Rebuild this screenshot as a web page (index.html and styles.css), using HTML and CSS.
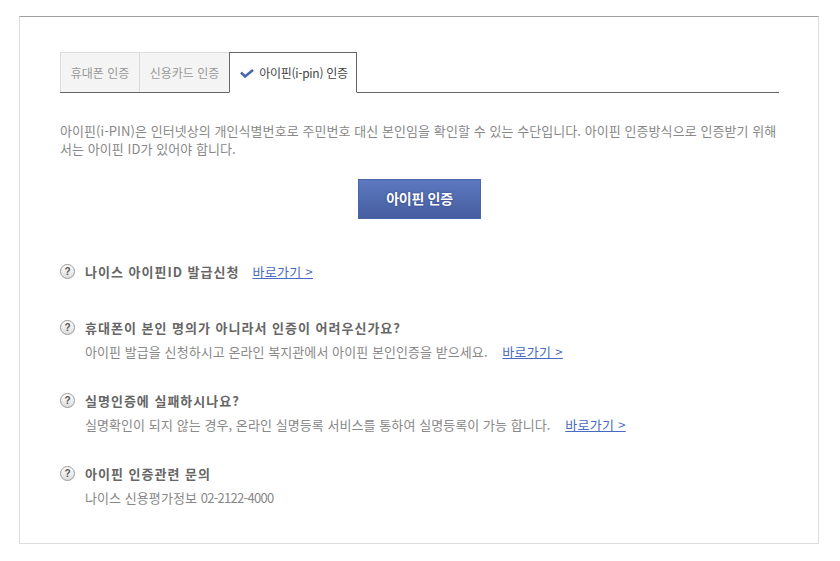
FILE: index.html
```html
<!DOCTYPE html>
<html lang="ko">
<head>
    <meta charset="UTF-8">
    <title>아이핀 인증</title>
    <link rel="stylesheet" href="styles.css">
</head>
<body>
    <div class="panel">
        <ul class="tabs">
            <li class="tab tab1">휴대폰 인증</li>
            <li class="tab tab2">신용카드 인증</li>
            <li class="tab tab3 on">
                <svg class="check" width="14" height="10" viewBox="0 0 14 10"><path d="M1 3.5 L5 7.5 L13 1" fill="none" stroke="#4a66ad" stroke-width="2.6"/></svg>
                아이핀(i-pin) 인증
            </li>
        </ul>

        <p class="desc">아이핀(i-PIN)은 인터넷상의 개인식별번호로 주민번호 대신 본인임을 확인할 수 있는 수단입니다. 아이핀 인증방식으로 인증받기 위해서는 아이핀 ID가 있어야 합니다.</p>

        <div class="btn_wrap"><a class="btn" href="#">아이핀 인증</a></div>

        <dl class="faq faq1">
            <dt><span class="q">?</span>나이스 아이핀ID 발급신청 <a class="go" href="#">바로가기 &gt;</a></dt>
        </dl>
        <dl class="faq faq2">
            <dt><span class="q">?</span>휴대폰이 본인 명의가 아니라서 인증이 어려우신가요?</dt>
            <dd>아이핀 발급을 신청하시고 온라인 복지관에서 아이핀 본인인증을 받으세요. <a class="go" href="#">바로가기 &gt;</a></dd>
        </dl>
        <dl class="faq faq3">
            <dt><span class="q">?</span>실명인증에 실패하시나요?</dt>
            <dd>실명확인이 되지 않는 경우, 온라인 실명등록 서비스를 통하여 실명등록이 가능 합니다. <a class="go" href="#">바로가기 &gt;</a></dd>
        </dl>
        <dl class="faq faq4">
            <dt><span class="q">?</span>아이핀 인증관련 문의</dt>
            <dd>나이스 신용평가정보 <span class="tel">02-2122-4000</span></dd>
        </dl>
    </div>
</body>
</html>
```

FILE: styles.css
```css
body {
    margin: 0;
    background-color: #ffffff;
    font-family: "Noto Sans CJK KR", "Liberation Sans", sans-serif;
    font-size: 13px;
    color: #888888;
}

.panel {
    box-sizing: border-box;
    width: 800px;
    height: 528px;
    margin: 16px 0 0 19px;
    padding: 35px 39px 0 40px;
    border: 1px solid #dddddd;
    border-top-color: #a0a0a0;
}

.tabs {
    display: flex;
    align-items: flex-start;
    box-sizing: border-box;
    height: 41px;
    margin: 0;
    padding: 0;
    list-style: none;
    border-bottom: 1px solid #666666;
}

.tab {
    box-sizing: border-box;
    height: 40px;
    line-height: 39px;
    font-size: 12px;
    text-align: center;
    background-color: #f4f4f4;
    border: 1px solid #dddddd;
    border-bottom: 0;
    border-right: 0;
    color: #999999;
}

.tab1 {
    width: 79px;
}

.tab2 {
    width: 90px;
}

.tab3 {
    width: 128px;
    height: 41px;
    padding-left: 2px;
    background-color: #ffffff;
    border: 1px solid #666666;
    border-bottom: 1px solid #ffffff;
    color: #444444;
    letter-spacing: -0.3px;
}

.check {
    margin-right: 2px;
    vertical-align: -1px;
}

.desc {
    margin: 29px 0 0 0;
    line-height: 18px;
    letter-spacing: 0.07px;
}

.btn_wrap {
    margin-top: 21px;
    text-align: center;
}

.btn {
    display: inline-block;
    box-sizing: border-box;
    width: 123px;
    height: 40px;
    line-height: 37px;
    font-size: 14px;
    font-weight: bold;
    letter-spacing: -0.3px;
    color: #ffffff;
    text-decoration: none;
    text-shadow: 0 0 2px #2b3f7c;
    border: 1px solid #4a66a8;
    background: linear-gradient(#5d78bf, #465ea0);
}

.faq {
    margin: 0;
}

.faq1 {
    margin-top: 42px;
}

.faq2 {
    margin-top: 36px;
}

.faq3 {
    margin-top: 28px;
}

.faq4 {
    margin-top: 28px;
}

.faq dt {
    display: flex;
    align-items: center;
    height: 20px;
    font-weight: bold;
    color: #666666;
    letter-spacing: 1px;
}

.faq dd {
    margin: 5px 0 0 25px;
    line-height: 20px;
    letter-spacing: 0.07px;
}

.tel {
    letter-spacing: -0.7px;
}

.q {
    box-sizing: border-box;
    width: 15px;
    height: 15px;
    margin-right: 10px;
    border: 1px solid #999999;
    border-radius: 50%;
    background: linear-gradient(#ffffff, #dddddd);
    font-family: "Liberation Sans", sans-serif;
    font-size: 10px;
    font-weight: bold;
    line-height: 13px;
    text-align: center;
    color: #555555;
    letter-spacing: 0;
}

.go {
    margin-left: 11px;
    font-weight: normal;
    color: #4a6ac0;
    letter-spacing: 0.3px;
}

.faq1 .go {
    margin-left: 13px;
}
```
